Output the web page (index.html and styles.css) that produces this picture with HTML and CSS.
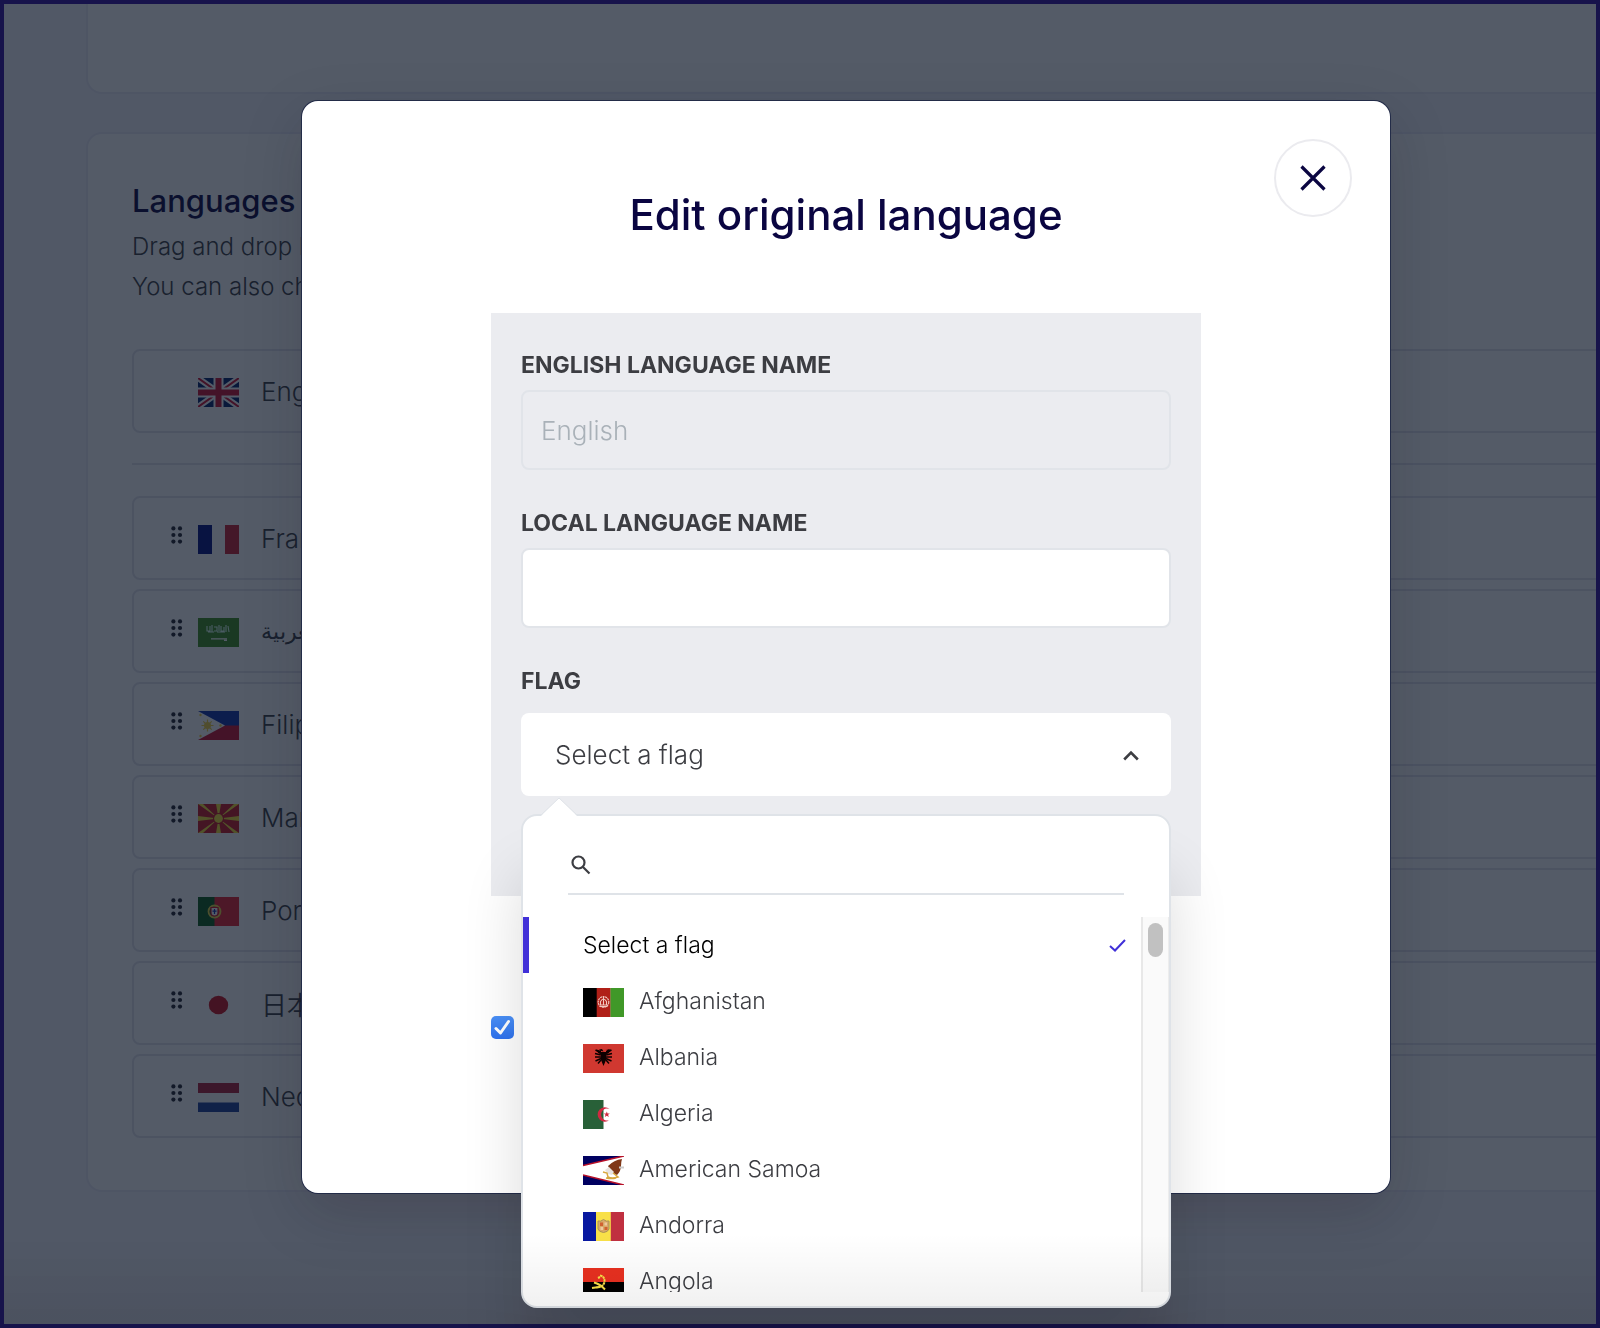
FILE: index.html
```html
<!DOCTYPE html>
<html lang="en">
<head>
  <meta charset="UTF-8" />
  <meta name="viewport" content="width=device-width, initial-scale=1" />
  <title>Edit original language</title>
  <link rel="stylesheet" href="styles.css">
</head>
<body>
  <!-- Dotted drag handle, reused on every sortable row -->
  <svg width="0" height="0" class="sprite" aria-hidden="true">
    <symbol id="grip" viewBox="0 0 12 18">
      <circle cx="2.4" cy="2.4" r="2.1"/><circle cx="9" cy="2.4" r="2.1"/>
      <circle cx="2.4" cy="9" r="2.1"/><circle cx="9" cy="9" r="2.1"/>
      <circle cx="2.4" cy="15.6" r="2.1"/><circle cx="9" cy="15.6" r="2.1"/>
    </symbol>
  </svg>

  <main class="page">
    <section class="card card-top"></section>

    <section class="card card-languages">
      <h2>Languages</h2>
      <p>Drag and drop languages to reorder them.<br>You can also change their name and flag.</p>

      <div class="row">
        <span class="grip"></span>
        <svg class="flag" viewBox="0 0 41 29">
          <rect width="41" height="29" fill="#012169"/>
          <path d="M0 0L41 29M41 0L0 29" stroke="#fff" stroke-width="6"/>
          <path d="M0 0L41 29M41 0L0 29" stroke="#c8102e" stroke-width="2"/>
          <path d="M20.5 0V29M0 14.5H41" stroke="#fff" stroke-width="10"/>
          <path d="M20.5 0V29M0 14.5H41" stroke="#c8102e" stroke-width="6"/>
        </svg>
        <span>English</span>
      </div>

      <hr>

      <ul class="rows">
        <li class="row">
          <svg class="grip"><use href="#grip"/></svg>
          <svg class="flag" viewBox="0 0 41 29">
            <rect width="41" height="29" fill="#fff"/>
            <rect width="14" height="29" fill="#00107f"/>
            <rect x="27" width="14" height="29" fill="#c8202f"/>
          </svg>
          <span>Français</span>
        </li>
        <li class="row">
          <svg class="grip"><use href="#grip"/></svg>
          <svg class="flag" viewBox="0 0 41 29">
            <rect width="41" height="29" fill="#3c8c1c"/>
            <path d="M9 8v5h3V8M14 7v7M16 9h3v4h-3M21 7v6M23 8v5h3V9M28 7v7M30 8l1 6M10 14h6M19 14h8" stroke="#dfe" stroke-width="1.1" fill="none"/>
            <path d="M13 20.8h16M26 22.4h3" stroke="#fff" stroke-width="1.2"/>
          </svg>
          <span lang="ar">العربية</span>
        </li>
        <li class="row">
          <svg class="grip"><use href="#grip"/></svg>
          <svg class="flag" viewBox="0 0 41 29">
            <rect width="41" height="15" fill="#0f2fa8"/>
            <rect y="14.5" width="41" height="14.5" fill="#c8102e"/>
            <path d="M0 0L27 14.5L0 29Z" fill="#fff"/>
            <path d="M9.500 8.500v12M3.500 14.500h12M5.300 10.300l8.400 8.400M13.700 10.300l-8.400 8.400" stroke="#f0d040" stroke-width="1.2"/>
            <circle cx="9.500" cy="14.500" r="3.500" fill="#f0d040"/>
            <circle cx="2.500" cy="4" r="1.200" fill="#f0d040"/><circle cx="2.500" cy="25" r="1.200" fill="#f0d040"/><circle cx="22.500" cy="14.500" r="1.200" fill="#f0d040"/>
          </svg>
          <span>Filipino</span>
        </li>
        <li class="row">
          <svg class="grip"><use href="#grip"/></svg>
          <svg class="flag" viewBox="0 0 41 29">
            <rect width="41" height="29" fill="#c81420"/>
            <path d="M0 0H5L20.500 14.500ZM36 0H41L20.500 14.500ZM0 29H5L20.500 14.500ZM36 29H41L20.500 14.500ZM18 0H23L20.500 14.500ZM18 29H23L20.500 14.500ZM0 12V17L20.500 14.500ZM41 12V17L20.500 14.500Z" fill="#f5e030"/>
            <circle cx="20.500" cy="14.500" r="5.500" fill="#c81420"/>
            <circle cx="20.500" cy="14.500" r="4.400" fill="#f5e030"/>
          </svg>
          <span>Македонски</span>
        </li>
        <li class="row">
          <svg class="grip"><use href="#grip"/></svg>
          <svg class="flag" viewBox="0 0 41 29">
            <rect width="41" height="29" fill="#e8202c"/>
            <rect width="16.500" height="29" fill="#0a5c18"/>
            <circle cx="16.500" cy="14.500" r="6" fill="none" stroke="#e8d840" stroke-width="1.800"/>
            <path d="M13 10.500h7v5.500q0 3-3.500 3T13 16Z" fill="#fff" stroke="#d01020" stroke-width="1.200"/>
            <path d="M16.500 12v5M14.500 14.200h4" stroke="#0f2fa8" stroke-width="1.200"/>
          </svg>
          <span>Português</span>
        </li>
        <li class="row">
          <svg class="grip"><use href="#grip"/></svg>
          <svg class="flag" viewBox="0 0 41 29">
            <rect width="41" height="29" fill="#fff"/>
            <ellipse cx="20.500" cy="15" rx="9.700" ry="9.300" fill="#c8101c"/>
          </svg>
          <span lang="ja">日本語</span>
        </li>
        <li class="row">
          <svg class="grip"><use href="#grip"/></svg>
          <svg class="flag" viewBox="0 0 41 29">
            <rect width="41" height="29" fill="#fff"/>
            <rect width="41" height="10" fill="#ae1c38"/>
            <rect y="19.500" width="41" height="9.500" fill="#1c3c98"/>
          </svg>
          <span>Nederlands</span>
        </li>
      </ul>
    </section>
  </main>

  <div class="overlay">
    <form class="modal" role="dialog" aria-labelledby="modal-title">
      <button type="button" class="close" aria-label="Close">
        <svg viewBox="0 0 26 26"><path d="M1.500 1.500L24.500 24.500M24.500 1.500L1.500 24.500"/></svg>
      </button>

      <h1 id="modal-title">Edit original language</h1>

      <div class="panel">
        <div class="field">
          <label for="englishName">English language name</label>
          <input type="text" id="englishName" value="English" disabled>
        </div>
        <div class="field">
          <label for="localName">Local language name</label>
          <input type="text" id="localName">
        </div>
        <div class="field field-flag">
          <label for="flag">Flag</label>
          <div class="select">
            <select id="flag">
              <option>Select a flag</option>
            </select>
            <svg class="chevron" viewBox="0 0 16 11"><path d="M1.200 9.500L8 2.500L14.800 9.500"/></svg>

            <!-- Open flag list -->
            <div class="dropdown">
              <svg class="caret" viewBox="0 0 36 19">
                <path class="caret-fill" d="M0 19L18 1L36 19Z"/>
                <path class="caret-line" d="M0 18L18 1L36 18"/>
              </svg>
              <div class="search">
                <svg viewBox="0 0 20 20"><circle cx="7.500" cy="7.500" r="6"/><path d="M12 12L18.500 18.500"/></svg>
                <input type="text" aria-label="Search a flag">
              </div>
              <div class="list">
                <ul>
                  <li>
                    <button type="button" class="option selected">Select a flag
                      <svg class="check" viewBox="0 0 17 13"><path d="M1 7L6 11.500L16 1"/></svg>
                    </button>
                  </li>
                  <li>
                    <button type="button" class="option">
                      <svg class="flag" viewBox="0 0 41 29">
                        <rect width="14" height="29" fill="#000"/>
                        <rect x="13.700" width="14" height="29" fill="#b02018"/>
                        <rect x="27.500" width="13.500" height="29" fill="#409828"/>
                        <circle cx="20.500" cy="14" r="5.300" fill="none" stroke="#f0c8c0" stroke-width="1.200" stroke-dasharray="2 .6"/>
                        <path d="M17.500 17v-3.500q3-5 6 0V17ZM20.500 9v8M16.500 18.500h8" fill="none" stroke="#f0c8c0" stroke-width="1.100"/>
                      </svg>
                      Afghanistan
                    </button>
                  </li>
                  <li>
                    <button type="button" class="option">
                      <svg class="flag" viewBox="0 0 41 29">
                        <rect width="41" height="29" fill="#d03830"/>
                        <path d="M20.500 7.500L19 5l-3 .5 2 1.500v3q-3 0-4.500-4.500M22 5l3 .5L23 7v3q3 0 4.500-4.500M18 8h5v8l-2.500 6L18 16Z" fill="#0c0000"/>
                        <path d="M18 9L12.500 6M18 11L12 9.500M18 13L12 13M18 14.500L12.500 17M23 9L28.500 6M23 11L29 9.500M23 13H29M23 14.500L28.500 17M18 16L15 19.500M23 16L26 19.500" stroke="#0c0000" stroke-width="1.500"/>
                      </svg>
                      Albania
                    </button>
                  </li>
                  <li>
                    <button type="button" class="option">
                      <svg class="flag" viewBox="0 0 41 29">
                        <rect width="41" height="29" fill="#fff"/>
                        <rect width="20.500" height="29" fill="#286038"/>
                        <path d="M26.500 9A7.200 7.200 0 1 0 26.500 20A6 6 0 1 1 26.500 9Z" fill="#d02840"/>
                        <path d="M23.800 11.500l.8 2 2.200 0-1.700 1.300.7 2.200-2-1.200-2 1.200.7-2.200-1.700-1.300 2.200 0Z" fill="#d02840"/>
                      </svg>
                      Algeria
                    </button>
                  </li>
                  <li>
                    <button type="button" class="option">
                      <svg class="flag" viewBox="0 0 41 29">
                        <rect width="41" height="29" fill="#000060"/>
                        <path d="M41 0L0 9.500V19L41 29Z" fill="#fff"/>
                        <path d="M41 0L0 9.500M0 19L41 29" stroke="#b81028" stroke-width="1.600"/>
                        <path d="M25 10q6-6 14-7-1 3-1 7 0 5-4 9-5-1-9-9Z" fill="#803818"/>
                        <path d="M22 14l4-3 5 5-2 3-4-1Z" fill="#e8e4e0"/>
                        <path d="M20 16l4 1 1 4q4 2 10 0l-5-4M23 22q6 1 10 0" fill="none" stroke="#d8a840" stroke-width="1.500"/>
                        <path d="M36 11.500h5" stroke="#ccc" stroke-width="2"/>
                      </svg>
                      American Samoa
                    </button>
                  </li>
                  <li>
                    <button type="button" class="option">
                      <svg class="flag" viewBox="0 0 41 29">
                        <rect width="13.500" height="29" fill="#0818a0"/>
                        <rect x="13" width="15" height="29" fill="#f8e048"/>
                        <rect x="27.800" width="13.200" height="29" fill="#c03040"/>
                        <path d="M15 9q2.500 1 5.500-1.500Q23.500 10 26 9v8q-1 3-5.500 3.500Q16 20 15 17Z" fill="#d8a868" stroke="#a89058"/>
                        <path d="M17 10.500h3v3.500h-3ZM21.500 15h3v3h-3Z" fill="#d06030"/>
                        <path d="M21.500 10.500h2.500v3h-2.500ZM17.500 15h2.500v3h-2.500Z" fill="#f0c8a0"/>
                      </svg>
                      Andorra
                    </button>
                  </li>
                  <li>
                    <button type="button" class="option">
                      <svg class="flag" viewBox="0 0 41 29">
                        <rect width="41" height="29" fill="#000"/>
                        <rect width="41" height="14" fill="#e83020"/>
                        <path d="M17 7.500q5 1 4.500 6.500-1 5-8 5.500" fill="none" stroke="#f8e048" stroke-width="2" stroke-dasharray="2.500 .5"/>
                        <path d="M11 14.500q6 1.500 11 7M9 20l7-1M15 10l2-1" fill="none" stroke="#f8e048" stroke-width="2"/>
                      </svg>
                      Angola
                    </button>
                  </li>
                </ul>
                <div class="scrollbar"><div class="thumb"></div></div>
              </div>
            </div>
          </div>
        </div>
      </div>

      <input type="checkbox" class="checkbox" aria-label="Apply to all translations" checked>
    </form>
  </div>
</body>
</html>
```
FILE: styles.css
```css
:root {
  --navy: #0a0541;
  --text: #3c3d42;
  --line: #dfe3e8;
  --panel: #ebecf0;
  --indigo: #4030d8;
}

* {
  box-sizing: border-box;
  margin: 0;
  padding: 0;
}

body {
  font-family: Inter, "DejaVu Sans", "Noto Sans CJK JP", sans-serif;
  font-weight: 340;
  color: var(--text);
  background: #f5f3fc;
  min-height: 100vh;
  overflow: hidden;
}

ul {
  list-style: none;
}

input,
select,
button {
  font: inherit;
  color: inherit;
}

.sprite {
  position: absolute;
}

/* Page behind the modal: cards run past the right edge */
.page {
  display: flex;
  flex-direction: column;
  gap: 38px;
  margin: 0 -40px 0 86px;
}

.card {
  background: #fff;
  border: 2px solid #ebeaf6;
  border-radius: 16px;
}

.card-top {
  height: 94px;
  border-top: none;
  border-radius: 0 0 16px 16px;
}

.card-languages {
  padding: 47px 0 52px 44px;
}

.card h2 {
  font-size: 31px;
  font-weight: 500;
  line-height: 40px;
  color: var(--navy);
}

.card p {
  font-size: 24px;
  line-height: 40px;
  margin: 6px 0 42px;
}

.card hr {
  border: none;
  border-top: 2px solid #e3e3ec;
  margin: 30px 0 31px;
}

.rows {
  display: flex;
  flex-direction: column;
  gap: 9px;
}

.row {
  display: flex;
  align-items: center;
  height: 84px;
  padding-left: 37px;
  border: 2px solid #e3e3ec;
  border-radius: 8px;
  font-size: 26px;
}

.row [lang="ar"] {
  font-size: 22px;
}

.grip {
  width: 12px;
  height: 18px;
  margin: 0 15px 6px 0;
  fill: #22232c;
}

.flag {
  flex: none;
  width: 41px;
  height: 29px;
}

.row .flag {
  margin: 3px 22px 0 0;
}

/* Modal */
.overlay {
  position: fixed;
  inset: 0;
  display: flex;
  align-items: flex-start;
  padding: 97px 206px 0 298px;
  border: 4px solid #17134b;
  background: rgba(12, 21, 39, 0.7);
}

.overlay::after {
  content: "";
  position: absolute;
  inset: auto 0 0;
  height: 90px;
  background: linear-gradient(transparent, rgba(0, 0, 0, 0.07));
  pointer-events: none;
}

.modal {
  position: relative;
  flex: 1;
  display: flex;
  flex-direction: column;
  padding: 88px 189px 154px;
  background: #fff;
  border-radius: 16px;
  box-shadow: 0 0 0 1px #232c48, 0 20px 60px rgba(20, 16, 30, 0.18);
}

.modal h1 {
  font-size: 42px;
  font-weight: 500;
  line-height: 52px;
  text-align: center;
  color: var(--navy);
  margin-bottom: 72px;
}

.close {
  position: absolute;
  top: 38px;
  right: 38px;
  display: flex;
  align-items: center;
  justify-content: center;
  width: 78px;
  height: 78px;
  border: 2px solid #ebebef;
  border-radius: 50%;
  background: #fff;
  cursor: pointer;
}

.close svg {
  width: 26px;
  height: 26px;
  stroke: var(--navy);
  stroke-width: 3.2;
}

.panel {
  display: flex;
  flex-direction: column;
  gap: 39px;
  padding: 38px 30px 100px;
  background: var(--panel);
}

.field {
  display: flex;
  flex-direction: column;
  gap: 11px;
}

.field-flag {
  gap: 18px;
}

.field label {
  font-size: 23px;
  font-weight: 650;
  line-height: 28px;
  text-transform: uppercase;
}

.field > input {
  height: 80px;
  padding: 0 18px;
  border: 2px solid #e1e4e9;
  border-radius: 8px;
  background: #fff;
  font-size: 26px;
}

.field > input:disabled {
  background: transparent;
  color: #a9b1b8;
}

.select {
  position: relative;
}

.select select {
  display: block;
  width: 100%;
  height: 83px;
  padding: 0 34px;
  appearance: none;
  border: none;
  border-radius: 8px;
  background: #fff;
  font-size: 26px;
}

.chevron {
  position: absolute;
  top: 37px;
  right: 32px;
  width: 16px;
  height: 11px;
  fill: none;
  stroke: var(--text);
  stroke-width: 2.6;
}

.dropdown {
  position: absolute;
  top: 101px;
  left: 0;
  right: 0;
  padding: 33px 0 14px;
  background: #fff;
  border: 2px solid var(--line);
  border-radius: 16px;
  box-shadow: 0 60px 60px rgba(0, 0, 0, 0.14);
}

.caret {
  position: absolute;
  top: -19px;
  left: 18px;
  width: 36px;
  height: 19px;
}

.caret-fill {
  fill: #fff;
}

.caret-line {
  fill: none;
  stroke: var(--line);
}

.search {
  display: flex;
  align-items: center;
  gap: 12px;
  height: 46px;
  margin: 0 45px 22px;
  padding: 0 3px;
  border-bottom: 2px solid var(--line);
}

.search svg {
  width: 20px;
  height: 20px;
  margin-bottom: 12px;
  fill: none;
  stroke: var(--text);
  stroke-width: 2.2;
}

.search input {
  flex: 1;
  border: none;
  outline: none;
  background: none;
  font-size: 23px;
}

.list {
  display: flex;
  height: 375px;
  overflow: hidden;
}

.list ul {
  flex: 1;
}

.option {
  display: flex;
  align-items: center;
  gap: 15px;
  width: 100%;
  height: 56px;
  padding: 0 15px 0 54px;
  border: none;
  border-left: 6px solid transparent;
  background: none;
  font-size: 23px;
  text-align: left;
  cursor: pointer;
}

.option.selected {
  border-color: var(--indigo);
  color: #000;
}

.option .flag {
  margin-top: 3px;
}

.check {
  width: 17px;
  height: 13px;
  margin-left: auto;
  fill: none;
  stroke: var(--indigo);
  stroke-width: 2;
}

.scrollbar {
  width: 28px;
  padding: 6px 5px;
  border-left: 2px solid #e8e8e8;
  border-right: 1px solid #ededed;
  background: #fafafa;
}

.thumb {
  width: 15px;
  height: 34px;
  border-radius: 8px;
  background: #c1c1c1;
}

.checkbox {
  appearance: none;
  width: 23px;
  height: 23px;
  margin-top: 120px;
  border-radius: 5px;
  background: url("data:image/svg+xml,%3Csvg xmlns='http://www.w3.org/2000/svg' viewBox='0 0 23 23'%3E%3Cpath d='M5 12.500L9.500 17L17.500 5.500' fill='none' stroke='white' stroke-width='3' stroke-linecap='round' stroke-linejoin='round'/%3E%3C/svg%3E"), linear-gradient(#4a90f7, #2f72ee);
}

@media (max-width: 1000px) {
  .overlay { padding: 40px 20px; }
  .modal { padding: 88px 30px 60px; }
}
```
